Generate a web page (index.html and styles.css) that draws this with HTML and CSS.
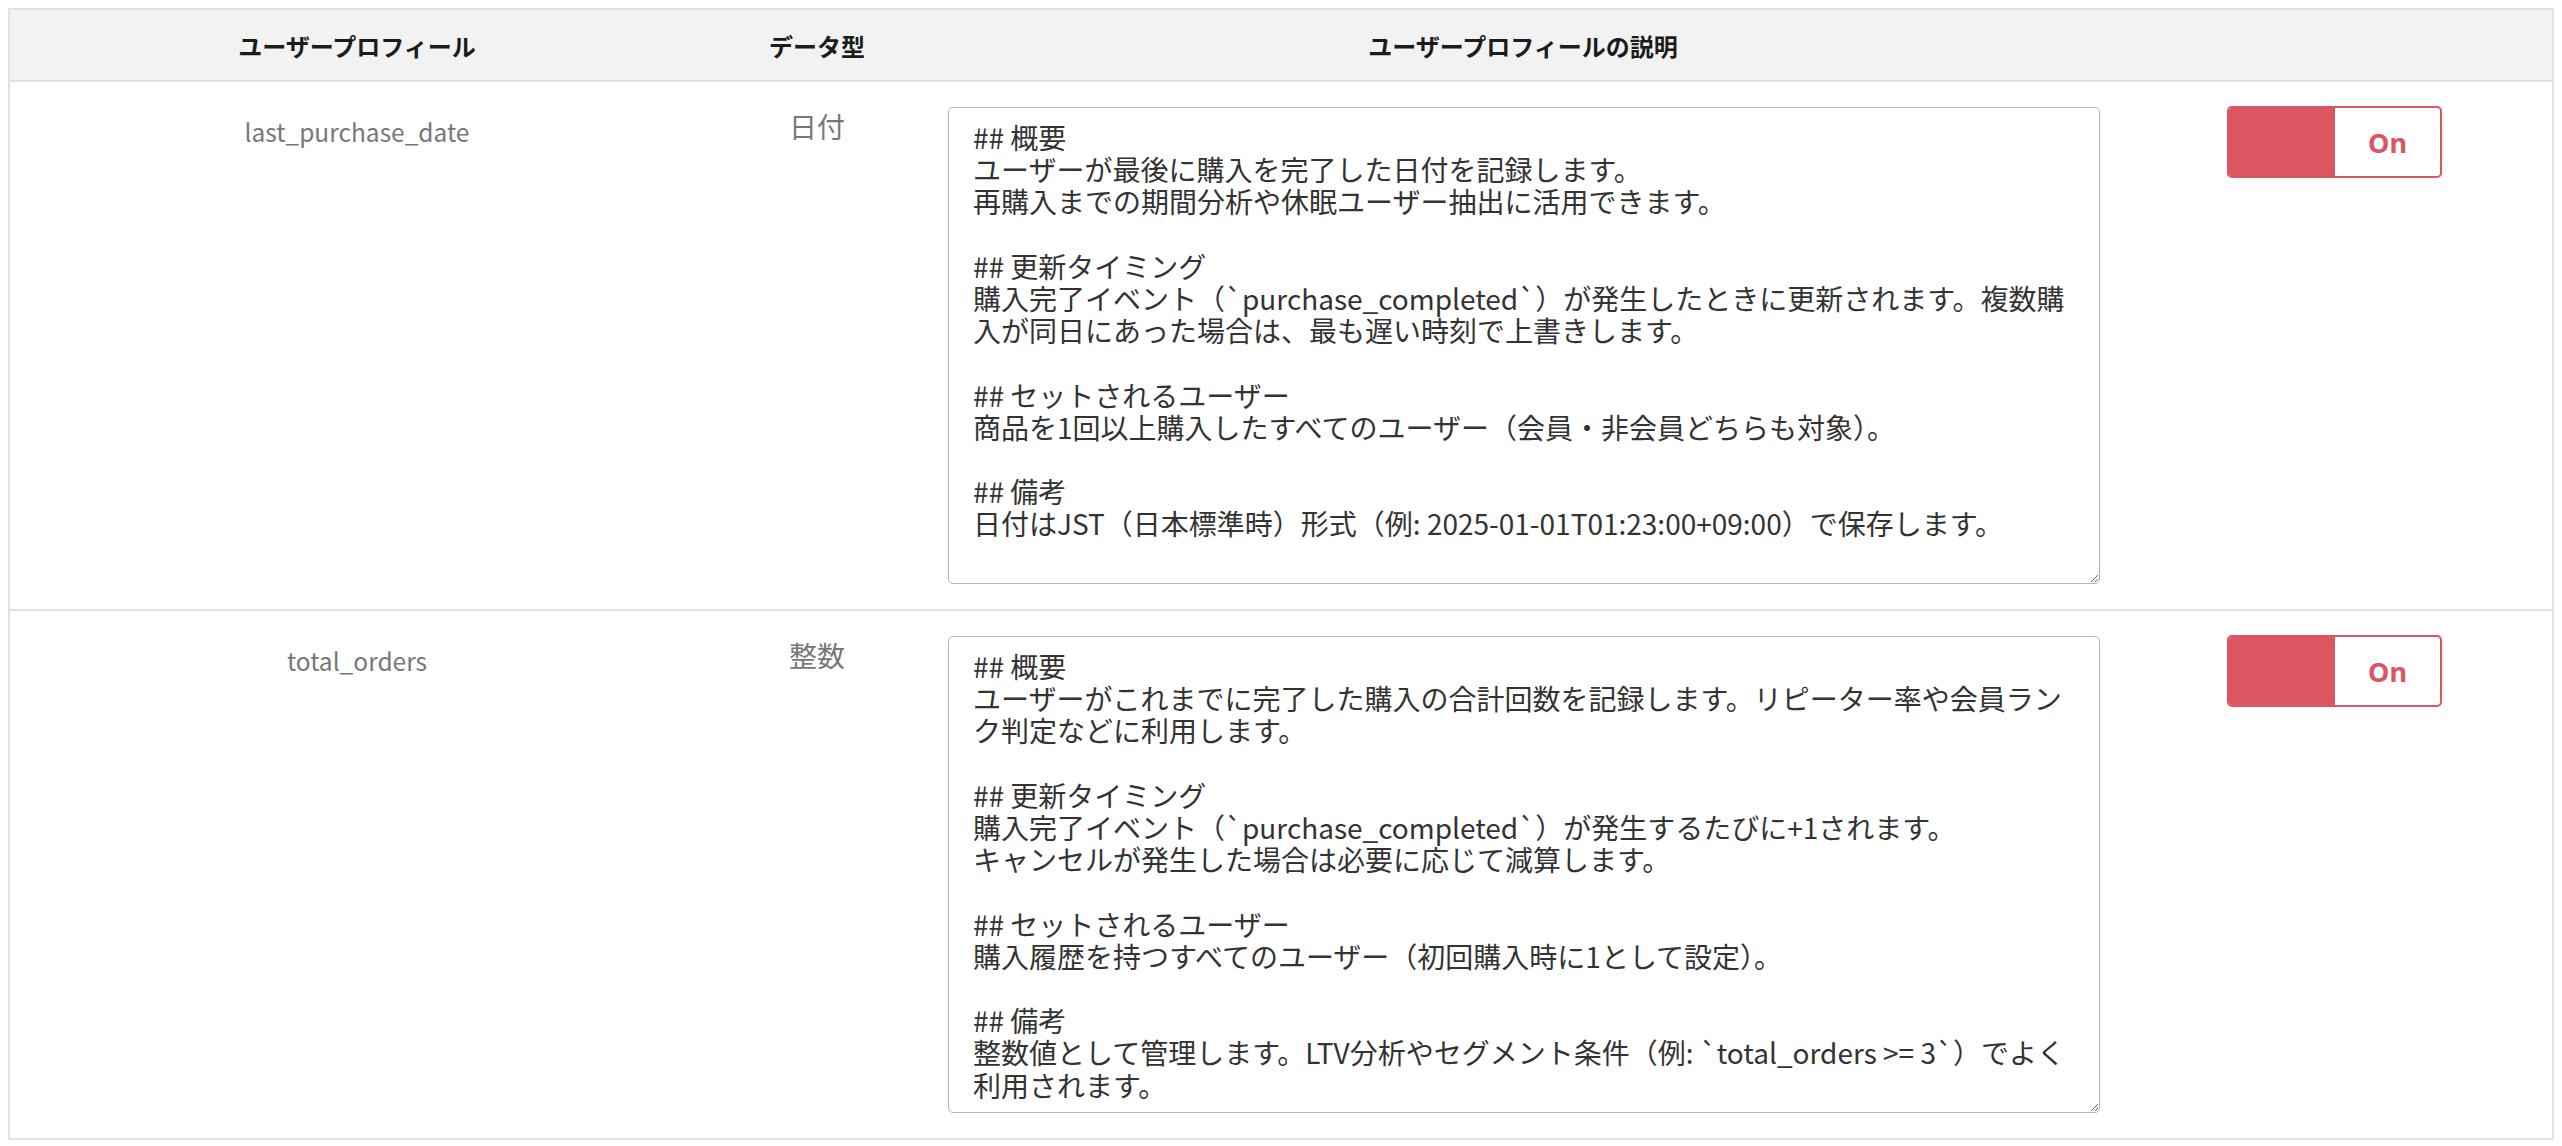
FILE: index.html
```html
<!DOCTYPE html>
<html lang="ja">
<head>
<meta charset="utf-8">
<title>ユーザープロフィール</title>
<link rel="stylesheet" href="styles.css">
</head>
<body>
<div class="table">
  <div class="row head">
    <div class="th">ユーザープロフィール</div>
    <div class="th">データ型</div>
    <div class="th">ユーザープロフィールの説明</div>
    <div class="th"></div>
  </div>
  <div class="row body">
    <div class="cell name">last_purchase_date</div>
    <div class="cell type">日付</div>
    <div class="cell desc"><textarea class="ta">## 概要
ユーザーが最後に購入を完了した日付を記録します。
再購入までの期間分析や休眠ユーザー抽出に活用できます。

## 更新タイミング
購入完了イベント（`purchase_completed`）が発生したときに更新されます。複数購入が同日にあった場合は、最も遅い時刻で上書きします。

## セットされるユーザー
商品を1回以上購入したすべてのユーザー（会員・非会員どちらも対象）。

## 備考
日付はJST（日本標準時）形式（例: 2025-01-01T01:23:00+09:00）で保存します。</textarea></div>
    <div class="cell sw"><div class="toggle"><span class="knob"></span><span class="lbl">On</span></div></div>
  </div>
  <div class="row body">
    <div class="cell name">total_orders</div>
    <div class="cell type">整数</div>
    <div class="cell desc"><textarea class="ta">## 概要
ユーザーがこれまでに完了した購入の合計回数を記録します。リピーター率や会員ランク判定などに利用します。

## 更新タイミング
購入完了イベント（`purchase_completed`）が発生するたびに+1されます。
キャンセルが発生した場合は必要に応じて減算します。

## セットされるユーザー
購入履歴を持つすべてのユーザー（初回購入時に1として設定）。

## 備考
整数値として管理します。LTV分析やセグメント条件（例: `total_orders >= 3`）でよく利用されます。</textarea></div>
    <div class="cell sw"><div class="toggle"><span class="knob"></span><span class="lbl">On</span></div></div>
  </div>
</div>
</body>
</html>
```
FILE: styles.css
```css
html, body {
  background: #ffffff;
}
body {
  margin: 8px;
  font-family: "Noto Sans CJK JP", "Noto Sans", sans-serif;
  color: #333;
}
.table {
  border: 2px solid #e2e2e2;
  border-bottom: none;
}
.row {
  display: grid;
  grid-template-columns: 694px 226px 1186px 1fr;
  border-bottom: 2px solid #e2e2e2;
}
.head {
  background: #f2f2f2;
  height: 70px;
  align-items: center;
}
.th {
  text-align: center;
  font-weight: 700;
  font-size: 24px;
  color: #1c1c1c;
}
.body {
  height: 527px;
}
.cell {
  box-sizing: border-box;
}
.name {
  text-align: center;
  font-size: 24.5px;
  line-height: 39px;
  color: #777;
  padding-top: 30px;
}
.type {
  text-align: center;
  font-size: 28px;
  line-height: 39px;
  color: #777;
  padding-top: 25px;
}
.desc {
  padding: 25px 16px 0 18px;
}
.ta {
  display: block;
  box-sizing: border-box;
  width: 1152px;
  height: 477px;
  margin: 0;
  padding: 13px 24px 9px;
  border: 1px solid #b4b4b8;
  border-radius: 5px;
  font-family: "Noto Sans CJK JP", "Noto Sans", sans-serif;
  font-size: 28px;
  line-height: 32.2px;
  color: #333;
  background: #fff;
  overflow: hidden;
}
.sw {
  display: flex;
  justify-content: center;
  padding-top: 24px;
  padding-left: 1px;
}
.toggle {
  box-sizing: border-box;
  width: 215px;
  height: 72px;
  border: 2px solid #dc5563;
  border-radius: 5px;
  display: flex;
  overflow: hidden;
  background: #fff;
}
.knob {
  width: 106px;
  background: #dc5563;
}
.lbl {
  flex: 1;
  display: flex;
  align-items: center;
  justify-content: center;
  font-family: "Noto Sans", sans-serif;
  font-weight: 700;
  font-size: 27px;
  color: #dc5563;
}
```
